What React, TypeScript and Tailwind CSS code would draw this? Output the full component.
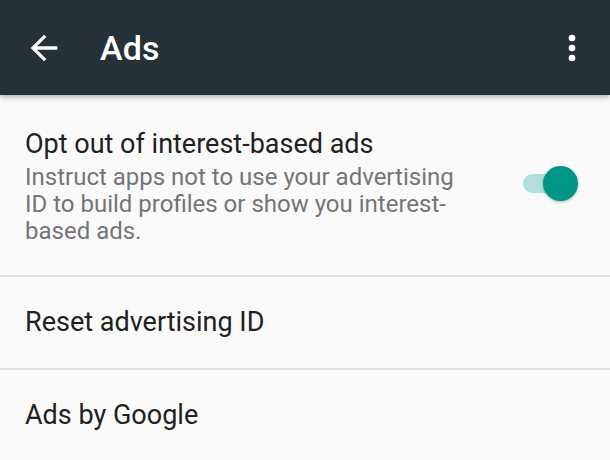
import React from "react";

export default function App() {
  return (
    <div className="w-[610px] h-[460px] overflow-hidden bg-[#fafafa] font-['Roboto',sans-serif] relative">
      <header className="relative z-10 h-[95px] bg-[#263238] flex items-center shadow-[0_2px_6px_rgba(0,0,0,0.3)]">
        <div className="w-[100px] flex items-center pl-[24px]">
          <svg width="40" height="40" viewBox="0 0 24 24" fill="#ffffff">
            <path d="M20 11H7.83l5.59-5.59L12 4l-8 8 8 8 1.41-1.41L7.83 13H20v-2z" />
          </svg>
        </div>
        <div className="flex-1 text-white text-[34px] font-medium leading-none tracking-[0.2px]">Ads</div>
        <div className="pr-[18px]">
          <svg width="40" height="40" viewBox="0 0 24 24" fill="#ffffff">
            <circle cx="12" cy="6" r="2" />
            <circle cx="12" cy="12" r="2" />
            <circle cx="12" cy="18" r="2" />
          </svg>
        </div>
      </header>

      <div className="flex items-start pl-[25px] pr-[32px] pt-[33px] pb-[30px]">
        <div className="flex-1">
          <div className="text-[27px] leading-[32px] text-[#212121]">Opt out of interest-based ads</div>
          <div className="mt-[4px] w-[440px] text-[24px] leading-[27px] text-[#757575]">
            Instruct apps not to use your advertising ID to build profiles or show you interest-based ads.
          </div>
        </div>
        <div className="relative w-[56px] h-[35px] flex items-center mt-[38px]">
          <div className="absolute left-[1px] w-[48px] h-[19px] rounded-full bg-[#b2dfdb]" />
          <div className="absolute right-0 w-[35px] h-[35px] rounded-full bg-[#009688] shadow-[0_1px_3px_rgba(0,0,0,0.3)]" />
        </div>
      </div>

      <div className="h-[2px] bg-[#e0e0e0]" />
      <div className="h-[91px] flex items-center pl-[25px] text-[27px] text-[#212121]">Reset advertising ID</div>
      <div className="h-[2px] bg-[#e0e0e0]" />
      <div className="h-[91px] flex items-center pl-[25px] text-[27px] text-[#212121]">Ads by Google</div>
    </div>
  );
}
